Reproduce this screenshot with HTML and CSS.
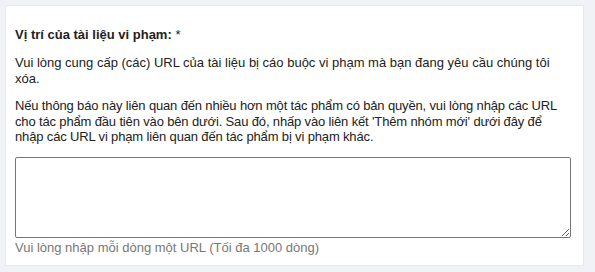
FILE: index.html
```html
<!DOCTYPE html>
<html lang="vi">
<head>
    <meta charset="UTF-8">
    <meta name="viewport" content="width=device-width, initial-scale=1.0">
    <title>Vị trí của tài liệu vi phạm</title>
    <link rel="stylesheet" href="styles.css">
</head>
<body>
    <div class="card">
        <h3 class="field-title">Vị trí của tài liệu vi phạm: <span class="req">*</span></h3>
        <p class="help">Vui lòng cung cấp (các) URL của tài liệu bị cáo buộc vi phạm mà bạn đang yêu cầu chúng tôi xóa.</p>
        <p class="help help-multi">Nếu thông báo này liên quan đến nhiều hơn một tác phẩm có bản quyền, vui lòng nhập các URL cho tác phẩm đầu tiên vào bên dưới. Sau đó, nhấp vào liên kết 'Thêm nhóm mới' dưới đây để nhập các URL vi phạm liên quan đến tác phẩm bị vi phạm khác.</p>
        <textarea class="url-box"></textarea>
        <div class="hint">Vui lòng nhập mỗi dòng một URL (Tối đa 1000 dòng)</div>
    </div>
</body>
</html>
```

FILE: styles.css
```css
body {
    margin: 0;
    padding: 5px 11px 7px 5px;
    background-color: #f1f2f5;
    font-family: "Liberation Sans", Arial, sans-serif;
    font-size: 13px;
    color: #222;
}
.card {
    background-color: #fff;
    border: 1px solid #e6e8ec;
    padding: 21px 12px 9px 9px;
}
.field-title {
    font-size: 13px;
    font-weight: bold;
    margin: 0 0 12px 0;
    line-height: 16px;
}
.req {
    font-weight: normal;
}
.help {
    margin: 0 0 12px 0;
    line-height: 15.5px;
}
.help-multi {
    letter-spacing: -0.15px; /* keeps "URL" on the first line */
}
.url-box {
    display: block;
    box-sizing: border-box;
    width: 100%;
    height: 81px;
    margin: 0;
    border: 1px solid #767676;
    border-radius: 2px;
    font-family: inherit;
    font-size: 13px;
}
.hint {
    color: #777;
    margin-top: 2px;
    line-height: 16px;
}
```
